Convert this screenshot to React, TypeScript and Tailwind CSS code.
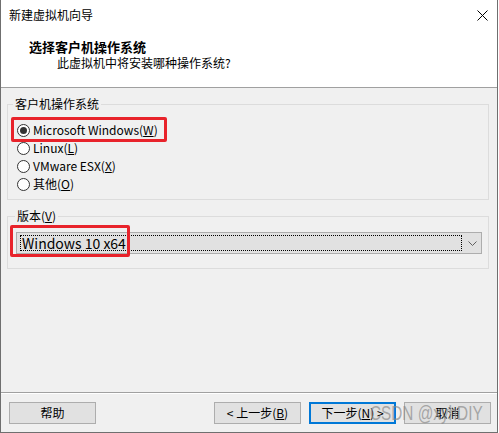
import React from 'react';

const FONT = "font-['Noto_Sans_CJK_SC','Noto_Sans',sans-serif]";

const OPTIONS = [
  { label: 'Microsoft Windows', key: 'W', checked: true },
  { label: 'Linux', key: 'L', checked: false },
  { label: 'VMware ESX', key: 'X', checked: false },
  { label: '其他', key: 'O', checked: false },
];

function Radio({ checked }: { checked: boolean }) {
  return (
    <span className="w-[13px] h-[13px] rounded-full border border-[#333] bg-white flex items-center justify-center shrink-0">
      {checked && <span className="w-[7px] h-[7px] rounded-full bg-[#333]" />}
    </span>
  );
}

function Button({ children, focused }: { children: React.ReactNode; focused?: boolean }) {
  return (
    <button
      className={
        'w-[87px] h-[22px] bg-[#e1e1e1] flex items-center justify-center text-[12px] leading-none text-black ' +
        (focused ? 'border-2 border-[#0078d7]' : 'border border-[#adadad]')
      }
    >
      {children}
    </button>
  );
}

export default function App() {
  return (
    <div className={`w-[499px] h-[433px] bg-white ${FONT}`}>
      <div className="relative w-[498px] h-[433px] border-l border-r border-b border-[#6f6f6f] bg-[#f0f0f0] flex flex-col text-[12px] text-black">
        {/* Header */}
        <div className="bg-white h-[88px] border-b border-[#a0a0a0] flex flex-col shrink-0">
          <div className="h-[30px] flex items-center justify-between pl-[8px] pr-[9px]">
            <span className="leading-[16px]">新建虚拟机向导</span>
            <svg width="11" height="11" viewBox="0 0 11 11" className="mt-[1px]">
              <path d="M0.5 0.5 L10.5 10.5 M10.5 0.5 L0.5 10.5" stroke="#000" strokeWidth="1" fill="none" />
            </svg>
          </div>
          <div className="pl-[28px] pt-[9px] font-bold text-[13px] leading-[16px]">选择客户机操作系统</div>
          <div className="pl-[56px] leading-[16px]">此虚拟机中将安装哪种操作系统?</div>
        </div>

        {/* Body */}
        <div className="pl-[6px] pt-[8px] flex flex-col">
          <fieldset className="w-[482px] border border-[#dcdcdc] p-0 m-0 pb-[6px]">
            <legend className="ml-[5px] px-[2px] leading-[16px]">客户机操作系统</legend>
            <div className="pt-[9px] pl-[9px] flex flex-col">
              {OPTIONS.map((o, i) => (
                <div key={o.key} className="relative h-[18px] flex items-center gap-[3px]">
                  <Radio checked={o.checked} />
                  <span className="leading-[16px]">
                    {o.label}(<u>{o.key}</u>)
                  </span>
                  {i === 0 && (
                    <span className="absolute left-[-6px] top-[-4px] w-[156px] h-[25px] border-[3px] border-[#e8232b] rounded-[2px]" />
                  )}
                </div>
              ))}
            </div>
          </fieldset>

          <fieldset className="mt-[8px] w-[482px] border border-[#dcdcdc] p-0 m-0 pb-[14px]">
            <legend className="ml-[7px] px-[2px] leading-[16px]">
              版本(<u>V</u>)
            </legend>
            <div className="pt-[8px] pl-[8px]">
              <div className="relative w-[466px] h-[22px] bg-[#e1e1e1] border border-[#adadad] flex items-center">
                <div className="ml-[3px] w-[442px] h-[16px] border border-dotted border-black flex items-center pl-[1px] text-[14px] leading-none">
                  Windows 10 x64
                </div>
                <svg width="9" height="5" viewBox="0 0 9 5" className="ml-[6px]">
                  <path d="M0.5 0.5 L4.5 4.5 L8.5 0.5" stroke="#606060" strokeWidth="1" fill="none" />
                </svg>
                <span className="absolute left-[-7px] top-[-8px] w-[120px] h-[32px] border-[3px] border-[#e8232b] rounded-[2px]" />
              </div>
            </div>
          </fieldset>
        </div>

        {/* Footer */}
        <div className="mt-auto border-t border-[#a0a0a0]">
          <div className="border-t border-white pt-[8px] pb-[8px] pl-[8px] pr-[6px] flex justify-between">
            <Button>帮助</Button>
            <div className="flex gap-[8px]">
              <Button>
                &lt; 上一步(<u>B</u>)
              </Button>
              <Button focused>
                下一步(<u>N</u>) &gt;
              </Button>
              <Button>取消</Button>
            </div>
          </div>
        </div>

        {/* Watermark */}
        <span className="absolute left-[369px] top-[402px] whitespace-nowrap origin-left scale-x-[0.73] text-[21px] leading-[21px] text-[#8a8a8a]/70 font-['Liberation_Sans',sans-serif] pointer-events-none">
          CSDN @xyhDIY
        </span>
      </div>
    </div>
  );
}
